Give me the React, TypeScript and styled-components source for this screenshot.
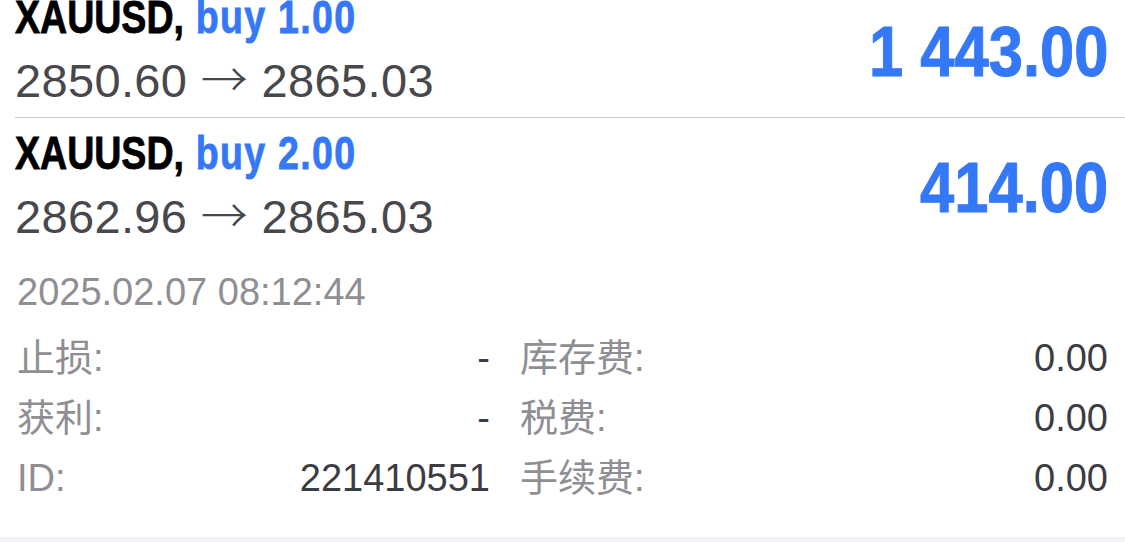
import React from 'react'
import styled, { createGlobalStyle } from 'styled-components'

const GlobalStyle = createGlobalStyle`
    html, body {
        margin: 0;
        padding: 0;
        background: #ffffff;
    }
    body {
        font-family: "Liberation Sans", Arial, "Noto Sans CJK SC", sans-serif;
        overflow: hidden;
    }
`

interface IPosition {
    symbol: string
    side: string
    volume: string
    openPrice: string
    currentPrice: string
    profit: string
}

interface IDetail {
    label: string
    value: string
}

const positions: IPosition[] = [
    { symbol: 'XAUUSD', side: 'buy', volume: '1.00', openPrice: '2850.60', currentPrice: '2865.03', profit: '1 443.00' },
    { symbol: 'XAUUSD', side: 'buy', volume: '2.00', openPrice: '2862.96', currentPrice: '2865.03', profit: '414.00' },
]

const leftDetails: IDetail[] = [
    { label: '止损', value: '-' },
    { label: '获利', value: '-' },
    { label: 'ID', value: '221410551' },
]

const rightDetails: IDetail[] = [
    { label: '库存费', value: '0.00' },
    { label: '税费', value: '0.00' },
    { label: '手续费', value: '0.00' },
]

const DetailColumnList: React.FC<{ items: IDetail[] }> = ({ items }) => {
    return (
        <DetailColumn>
            {items.map(d => (
                <DetailLine key={d.label}>
                    <Label>{d.label}:</Label>
                    <Value>{d.value}</Value>
                </DetailLine>
            ))}
        </DetailColumn>
    )
}

const PositionRow: React.FC<{ position: IPosition; expanded?: boolean }> = ({ position, expanded }) => {
    return (
        <Row>
            <Summary>
                <Info>
                    <Title>
                        {position.symbol},<Side> {position.side} {position.volume}</Side>
                    </Title>
                    <Prices>
                        {position.openPrice} <Arrow>→</Arrow> {position.currentPrice}
                    </Prices>
                </Info>
                <Profit>{position.profit}</Profit>
            </Summary>
            {expanded && (
                <Details>
                    <OpenTime>2025.02.07 08:12:44</OpenTime>
                    <DetailGrid>
                        <DetailColumnList items={leftDetails} />
                        <DetailColumnList items={rightDetails} />
                    </DetailGrid>
                </Details>
            )}
        </Row>
    )
}

const App: React.FC = () => {
    return (
        <>
            <GlobalStyle />
            <Page>
                <List>
                    {positions.map((p, i) => (
                        <PositionRow key={i} position={p} expanded={i === positions.length - 1} />
                    ))}
                </List>
                <Footer />
            </Page>
        </>
    )
}

export default App

const Page = styled.div`
    width: 1125px;
    height: 542px;
    overflow: hidden;
    display: flex;
    flex-direction: column;
`

const List = styled.div`
    margin-top: -18px;
    padding-left: 15px;
`

const Row = styled.div`
    padding-right: 17px;
    border-bottom: 1px solid #c8c7cc;

    &:last-child {
        border-bottom: none;
    }
`

const Summary = styled.div`
    display: flex;
    align-items: center;
    justify-content: space-between;
    padding: 3px 0 4px;
`

const Info = styled.div`
    display: flex;
    flex-direction: column;
    align-items: flex-start;
`

// condensed bold face: no narrow font installed, so squeeze Liberation Sans
const Title = styled.div`
    display: inline-block;
    font-weight: 700;
    font-size: 46px;
    line-height: 64px;
    color: #000000;
    white-space: nowrap;
    -webkit-text-stroke-width: 0.8px;
    transform: scaleX(0.816);
    transform-origin: left center;
`

const Side = styled.span`
    color: #3478f6;
    letter-spacing: 1.6px;
`

const Prices = styled.div`
    font-size: 47px;
    letter-spacing: 0.35px;
    line-height: 64px;
    height: 64px;
    color: #48484c;
    white-space: nowrap;
`

const Arrow = styled.span`
    font-family: "Noto Sans CJK SC", sans-serif;
    font-weight: 300;
    line-height: 1;
    display: inline-block;
    vertical-align: baseline;
`

const Profit = styled.div`
    font-weight: 700;
    font-size: 71px;
    line-height: 80px;
    color: #3478f6;
    margin-top: 6px;
    white-space: nowrap;
    -webkit-text-stroke-width: 1px;
    transform: scaleX(0.866);
    transform-origin: right center;
`

const Details = styled.div`
    padding: 14px 0 0 2px;
`

const OpenTime = styled.div`
    font-size: 38px;
    line-height: 50px;
    color: #8e8e93;
    margin-bottom: 11px;
`

const DetailGrid = styled.div`
    display: grid;
    grid-template-columns: 473px 1fr;
    column-gap: 30px;
`

const DetailColumn = styled.div`
    display: flex;
    flex-direction: column;
`

const DetailLine = styled.div`
    display: flex;
    justify-content: space-between;
    align-items: baseline;
    height: 60px;
    line-height: 60px;
    font-size: 38px;
`

const Label = styled.span`
    font-family: "Liberation Sans", "Noto Sans CJK SC", sans-serif;
    color: #8e8e93;
`

const Value = styled.span`
    color: #3c3c43;
`

const Footer = styled.div`
    margin-top: auto;
    height: 5px;
    flex-shrink: 0;
    background: #f2f2f7;
`
